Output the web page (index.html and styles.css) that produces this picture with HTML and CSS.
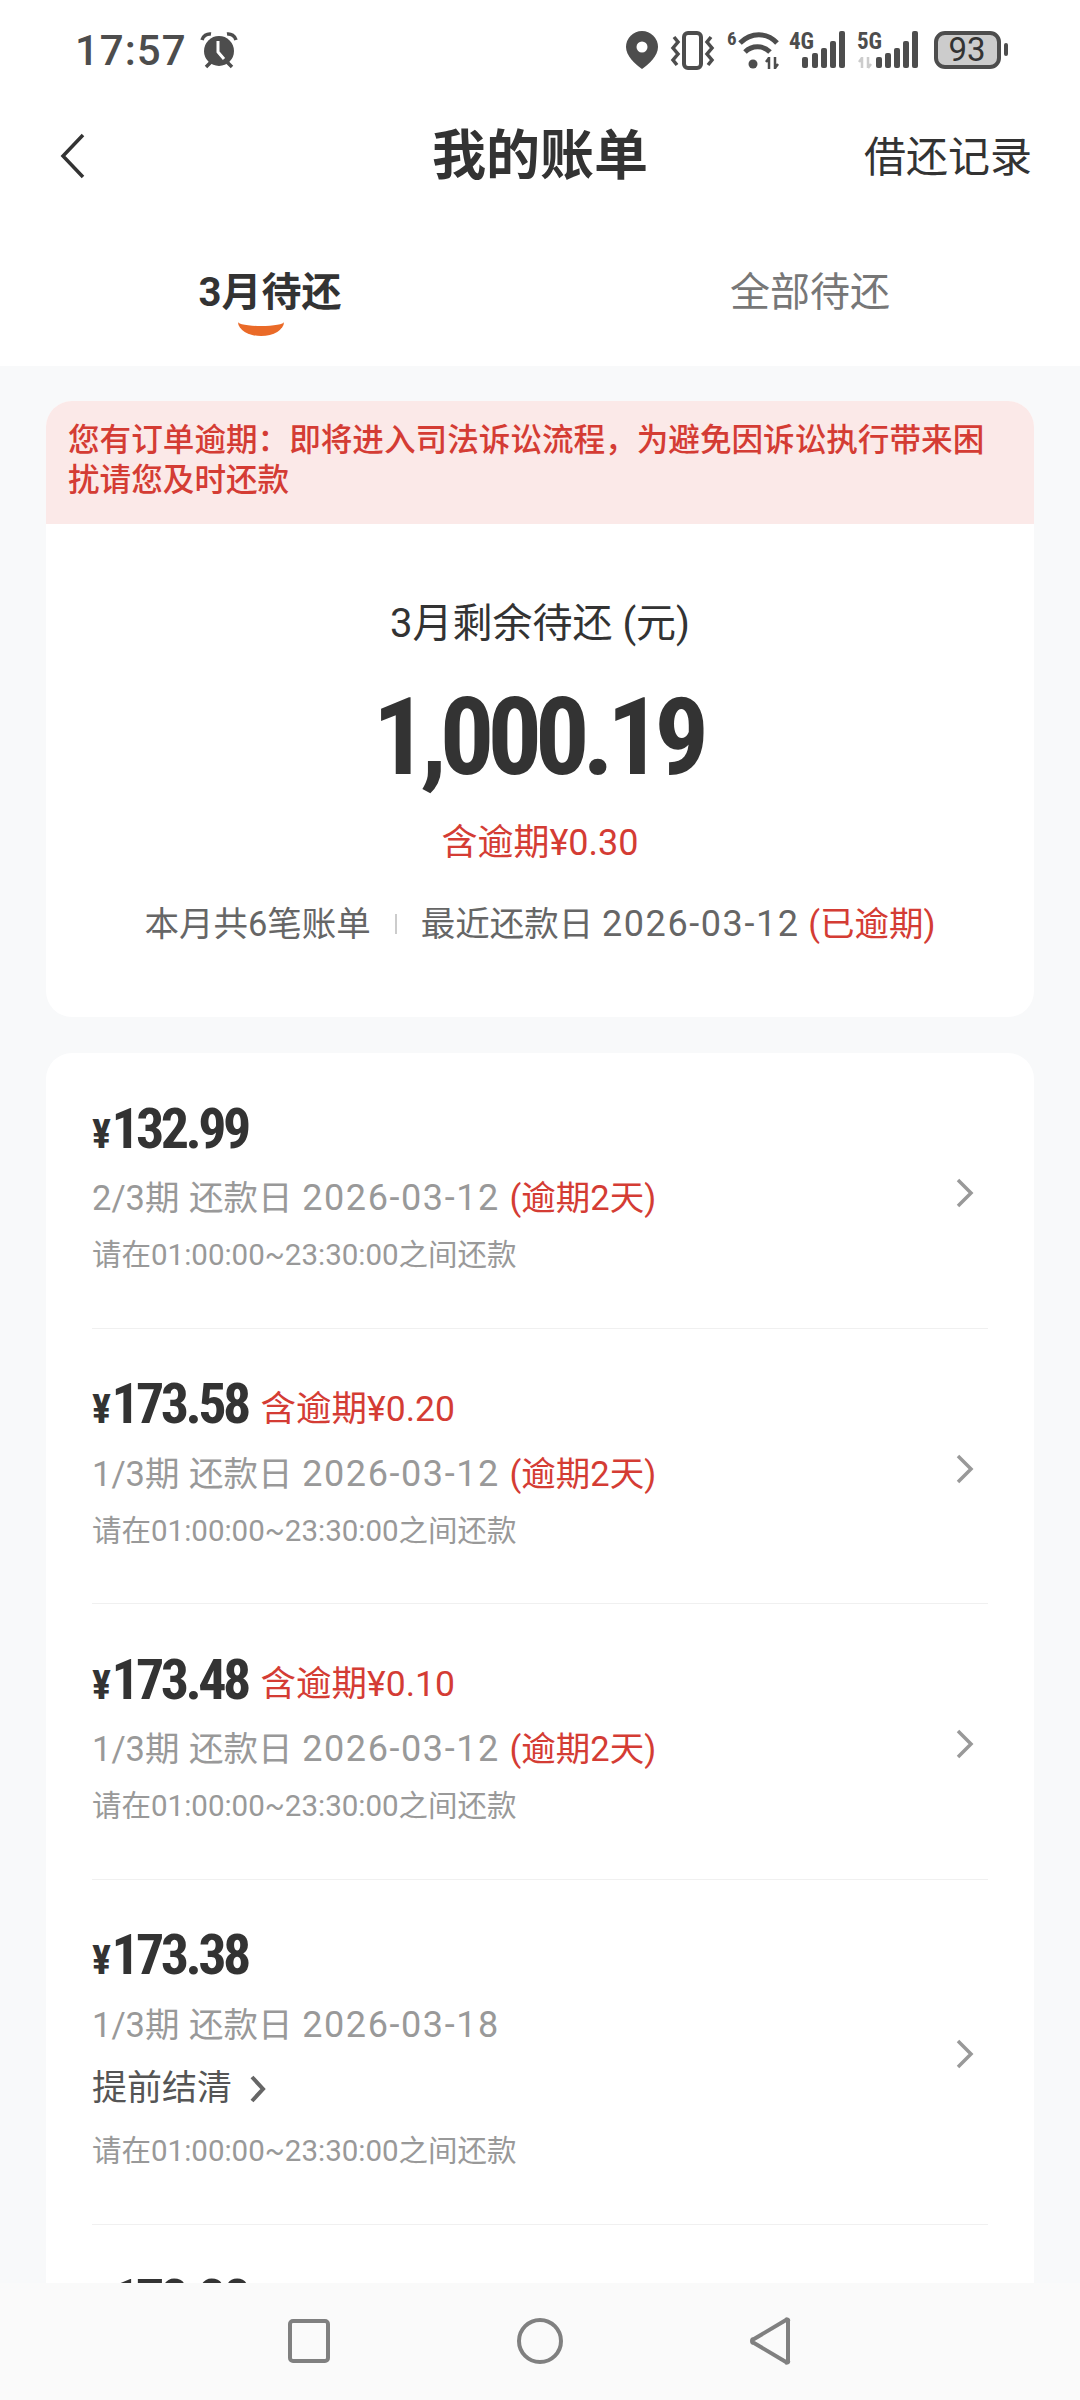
FILE: index.html
```html
<!DOCTYPE html>
<html lang="zh-CN">
<head>
    <meta charset="UTF-8">
    <meta name="viewport" content="width=device-width, initial-scale=1.0">
    <title>我的账单</title>
    <link rel="stylesheet" href="styles.css">
</head>
<body>
    <div class="status-bar">
        <div class="status-left">
            <span class="status-time">17:57</span>
            <svg class="alarm-icon" viewBox="0 0 38 38" width="38" height="38">
                <circle cx="19" cy="20" r="15" fill="#4d4d4d"/>
                <path d="M18 10v11l6 7" fill="none" stroke="#fff" stroke-width="3"/>
                <path d="M2 9a8 8 0 0 1 9-6M36 9a8 8 0 0 0-9-6" fill="none" stroke="#4d4d4d" stroke-width="3.5"/>
                <path d="M6 36l5-5M32 36l-5-5" fill="none" stroke="#4d4d4d" stroke-width="3.5"/>
            </svg>
        </div>
        <svg class="status-icons" viewBox="626 28 384 46" width="384" height="46">
            <!-- location -->
            <path d="M642 32a16 16 0 0 1 16 16c0 9-9 17-16 22c-7-5-16-13-16-22a16 16 0 0 1 16-16z" fill="#4d4d4d"/>
            <circle cx="642" cy="48" r="5.5" fill="#fff"/>
            <!-- vibrate -->
            <rect x="684" y="34" width="17" height="35" rx="4" fill="none" stroke="#4d4d4d" stroke-width="4"/>
            <path d="M674 38l4 5-5 6 5 6-5 6 4 5M711 38l-4 5 5 6-5 6 5 6-4 5" fill="none" stroke="#4d4d4d" stroke-width="3.5"/>
            <!-- wifi -->
            <text x="727" y="46" class="icon-text small">6</text>
            <path d="M740 44c11-11 27-11 37 0M745 53c7-7 18-7 25 0" fill="none" stroke="#4d4d4d" stroke-width="5"/>
            <circle cx="753" cy="65" r="4.5" fill="#4d4d4d"/>
            <path d="M769 58v12M775 58v12M766 63l3-4M778 65l-3 4" fill="none" stroke="#4d4d4d" stroke-width="2.5"/>
            <!-- 4G -->
            <text x="789" y="50" class="icon-text">4G</text>
            <g fill="#4d4d4d">
                <rect x="802" y="58" width="6" height="11" rx="2"/>
                <rect x="812" y="54" width="6" height="15" rx="2"/>
                <rect x="821" y="49" width="6" height="20" rx="2"/>
                <rect x="830" y="42" width="6" height="27" rx="2"/>
                <rect x="839" y="32" width="6" height="37" rx="2"/>
            </g>
            <!-- 5G -->
            <text x="857" y="50" class="icon-text">5G</text>
            <path d="M862 58v11M868 58v11M859 63l3-4M871 65l-3 4" fill="none" stroke="#ccc" stroke-width="2.5"/>
            <g fill="#4d4d4d">
                <rect x="876" y="58" width="6" height="11" rx="2"/>
                <rect x="885" y="54" width="6" height="15" rx="2"/>
                <rect x="894" y="49" width="6" height="20" rx="2"/>
                <rect x="903" y="42" width="6" height="27" rx="2"/>
                <rect x="912" y="32" width="6" height="37" rx="2"/>
            </g>
            <!-- battery -->
            <rect x="936" y="34" width="63" height="34" rx="9" fill="#ccc" stroke="#4d4d4d" stroke-width="4"/>
            <rect x="1004" y="44" width="4" height="13" rx="2" fill="#4d4d4d"/>
            <text x="967" y="62" class="icon-text battery" text-anchor="middle">93</text>
        </svg>
    </div>

    <header class="page-header">
        <svg class="back-icon" viewBox="0 0 26 46" width="26" height="46">
            <path d="M23 2L3 23l20 21" fill="none" stroke="#333" stroke-width="3.5"/>
        </svg>
        <h1>我的账单</h1>
        <a class="header-link">借还记录</a>
    </header>

    <div class="tabs">
        <div class="tab active">3月待还</div>
        <div class="tab">全部待还</div>
    </div>

    <main>
        <section class="card summary">
            <p class="notice">您有订单逾期&#xFF1A;即将进入司法诉讼流程&#xFF0C;为避免因诉讼执行带来困扰请您及时还款</p>
            <div class="summary-body">
                <p class="summary-title">3月剩余待还 (元)</p>
                <p class="summary-amount">1,000.19</p>
                <p class="summary-late">含逾期¥0.30</p>
                <p class="summary-meta">
                    <span>本月共6笔账单</span>
                    <i class="meta-sep"></i>
                    <span>最近还款日 <span class="num">2026-03-12</span> <em>(已逾期)</em></span>
                </p>
            </div>
        </section>

        <section class="card bills">
            <div class="bill">
                <div class="bill-info">
                    <p class="bill-price"><span class="price"><span class="yen">¥</span>132.99</span></p>
                    <p class="bill-date">2/3期 还款日 <span class="num">2026-03-12</span> <em>(逾期2天)</em></p>
                    <p class="bill-hint">请在01:00:00~23:30:00之间还款</p>
                </div>
                <svg class="chevron" viewBox="0 0 20 32" width="20" height="32"><path d="M3 3l13 13L3 29" fill="none" stroke="#999" stroke-width="3.5"/></svg>
            </div>
            <div class="bill">
                <div class="bill-info">
                    <p class="bill-price"><span class="price"><span class="yen">¥</span>173.58</span> <span class="late">含逾期¥0.20</span></p>
                    <p class="bill-date">1/3期 还款日 <span class="num">2026-03-12</span> <em>(逾期2天)</em></p>
                    <p class="bill-hint">请在01:00:00~23:30:00之间还款</p>
                </div>
                <svg class="chevron" viewBox="0 0 20 32" width="20" height="32"><path d="M3 3l13 13L3 29" fill="none" stroke="#999" stroke-width="3.5"/></svg>
            </div>
            <div class="bill">
                <div class="bill-info">
                    <p class="bill-price"><span class="price"><span class="yen">¥</span>173.48</span> <span class="late">含逾期¥0.10</span></p>
                    <p class="bill-date">1/3期 还款日 <span class="num">2026-03-12</span> <em>(逾期2天)</em></p>
                    <p class="bill-hint">请在01:00:00~23:30:00之间还款</p>
                </div>
                <svg class="chevron" viewBox="0 0 20 32" width="20" height="32"><path d="M3 3l13 13L3 29" fill="none" stroke="#999" stroke-width="3.5"/></svg>
            </div>
            <div class="bill">
                <div class="bill-info">
                    <p class="bill-price"><span class="price"><span class="yen">¥</span>173.38</span></p>
                    <p class="bill-date">1/3期 还款日 <span class="num">2026-03-18</span></p>
                    <p class="bill-action">提前结清
                        <svg viewBox="0 0 20 30" width="20" height="30"><path d="M4 3l11 12L4 27" fill="none" stroke="#666" stroke-width="4"/></svg>
                    </p>
                    <p class="bill-hint bill-hint-wide">请在01:00:00~23:30:00之间还款</p>
                </div>
                <svg class="chevron" viewBox="0 0 20 32" width="20" height="32"><path d="M3 3l13 13L3 29" fill="none" stroke="#999" stroke-width="3.5"/></svg>
            </div>
            <div class="bill">
                <div class="bill-info">
                    <p class="bill-price"><span class="price"><span class="yen">¥</span>173.38</span></p>
                </div>
            </div>
        </section>
    </main>

    <nav class="nav-bar">
        <svg viewBox="0 0 44 46" width="44" height="46"><rect x="3" y="3" width="38" height="40" rx="3" fill="none" stroke="#808080" stroke-width="4"/></svg>
        <svg viewBox="0 0 48 48" width="48" height="48"><circle cx="24" cy="24" r="21" fill="none" stroke="#808080" stroke-width="4"/></svg>
        <svg viewBox="0 0 44 48" width="44" height="48"><path d="M39 4v40a1 1 0 0 1-2 1L5 26a2 2 0 0 1 0-4L37 3a1 1 0 0 1 2 1z" fill="none" stroke="#808080" stroke-width="4" stroke-linejoin="round"/></svg>
    </nav>
</body>
</html>
```

FILE: styles.css
```css
:root {
    --text-color: #333333;
    --muted-color: #999999;
    --red-color: #d43c34;
    --page-color: #f8f9fa;
}

* {
    margin: 0;
    padding: 0;
    box-sizing: border-box;
}

body {
    width: 1080px;
    height: 2400px;
    overflow: hidden;
    display: flex;
    flex-direction: column;
    font-family: Roboto, 'Noto Sans CJK SC', sans-serif;
    color: var(--text-color);
    background-color: var(--page-color);
}

em {
    font-style: normal;
    color: var(--red-color);
}

.num {
    font-size: 36px;
    letter-spacing: 1.6px;
}

/* status bar */
.status-bar {
    height: 100px;
    flex: none;
    display: flex;
    justify-content: space-between;
    align-items: center;
    padding: 0 70px 0 75px;
    background-color: white;
}

.status-left {
    display: flex;
    align-items: center;
    gap: 13px;
}

.status-time {
    font-size: 42px;
    font-weight: 500;
    letter-spacing: 1px;
    color: #4d4d4d;
}

.icon-text {
    font-family: Roboto, sans-serif;
    font-size: 23px;
    font-weight: 700;
    font-stretch: 75%;
    fill: #4d4d4d;
}

.icon-text.small {
    font-size: 19px;
}

.icon-text.battery {
    font-size: 33px;
    font-weight: 400;
    font-stretch: 100%;
    fill: #333;
}

/* header and tabs */
.page-header {
    height: 112px;
    flex: none;
    display: flex;
    justify-content: space-between;
    align-items: center;
    position: relative;
    padding: 0 48px 0 60px;
    background-color: white;
}

.page-header h1 {
    font-size: 54px;
    line-height: 64px;
    font-weight: 700;
    position: absolute;
    left: 0;
    right: 0;
    top: 25px;
    text-align: center;
}

.header-link {
    font-size: 42px;
    padding-bottom: 6px;
}

.tabs {
    height: 154px;
    flex: none;
    display: flex;
    background-color: white;
}

.tab {
    flex: 1;
    display: flex;
    justify-content: center;
    align-items: center;
    font-size: 40px;
    color: #777777;
    position: relative;
}

.tab.active {
    font-weight: 700;
    color: var(--text-color);
}

.tab.active::after {
    content: '';
    position: absolute;
    left: 238px;
    top: 110px;
    width: 46px;
    height: 4px;
    border-bottom: 10px solid #ea6a28;
    border-radius: 0 0 23px 23px / 0 0 14px 14px;
}

/* content */
main {
    flex: 1;
    min-height: 0;
    overflow: hidden;
    padding: 35px 46px 0;
    display: flex;
    flex-direction: column;
    gap: 36px;
}

.card {
    flex: none;
    background-color: white;
    border-radius: 26px;
    overflow: hidden;
}

.notice {
    padding: 20px 22px 23px;
    font-size: 31.6px;
    line-height: 40px;
    font-weight: 500;
    color: var(--red-color);
    background-color: #fbe9e8;
}

.summary-body {
    padding: 70px 0 68px;
    text-align: center;
}

.summary-title {
    font-size: 40px;
    line-height: 60px;
}

.summary-amount {
    margin-top: 23px;
    padding-right: 5px;
    font-size: 108px;
    line-height: 120px;
    font-weight: 700;
    font-stretch: 75%;
    letter-spacing: -7px;
}

.summary-late {
    margin-top: 21px;
    font-size: 36px;
    line-height: 50px;
    color: var(--red-color);
}

.summary-meta {
    margin-top: 31px;
    display: flex;
    justify-content: center;
    align-items: center;
    gap: 24px;
    font-size: 34.5px;
    line-height: 50px;
    color: #666666;
}

.meta-sep {
    width: 2px;
    height: 20px;
    background-color: #cccccc;
}

.bills {
    padding: 0 46px;
}

.bill {
    display: flex;
    justify-content: space-between;
    align-items: center;
    border-bottom: 1px solid #f0f0f0;
    padding: 46px 13px 50.5px 0;
}

.chevron {
    margin-top: 10px;
}

.bill-price {
    height: 60px;
    padding-top: 5px;
    display: flex;
    align-items: center;
    gap: 13px;
    line-height: 55px;
}

.price {
    font-size: 56px;
    font-weight: 700;
    font-stretch: 80%;
    letter-spacing: -3.6px;
}

.yen {
    font-size: 40px;
    margin-right: 4px;
}

.late {
    margin-top: 4px;
    font-size: 35.5px;
    color: var(--red-color);
}

.bill-date {
    margin-top: 14px;
    height: 50px;
    font-size: 34.5px;
    line-height: 50px;
    word-spacing: 1px;
    color: var(--muted-color);
}

.bill-action {
    margin-top: 14px;
    height: 50px;
    display: flex;
    align-items: center;
    gap: 16px;
    font-size: 35px;
    line-height: 50px;
    color: #555555;
}

.bill-hint {
    margin-top: 10px;
    height: 44px;
    font-size: 29.5px;
    line-height: 44px;
    color: var(--muted-color);
}

.bill-hint-wide {
    margin-top: 15.5px;
}

.nav-bar {
    height: 117px;
    flex: none;
    display: flex;
    justify-content: center;
    align-items: center;
    gap: 185px;
    padding-bottom: 1px;
    background-color: #fafafa;
}
```
